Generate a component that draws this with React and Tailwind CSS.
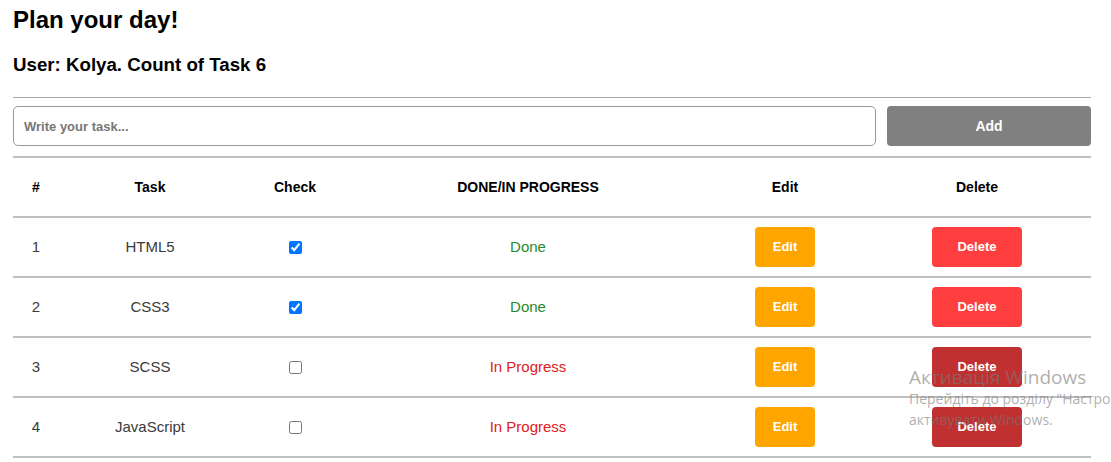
import React from "react";

const tasks = [
  { id: 1, name: "HTML5", done: true },
  { id: 2, name: "CSS3", done: true },
  { id: 3, name: "SCSS", done: false },
  { id: 4, name: "JavaScript", done: false },
];

const cols = "grid grid-cols-[46px_182px_108px_358px_156px_228px] items-center";

export default function App() {
  return (
    <div
      className="relative w-[1111px] h-[462px] overflow-hidden bg-white text-black"
      style={{ fontFamily: '"Liberation Sans", Arial, sans-serif' }}
    >
      <div className="pl-[13px] pr-[20px]">
        <h1 className="mt-[6px] text-[24px] leading-[28px] font-bold">Plan your day!</h1>
        <h2 className="mt-[20px] text-[18.7px] leading-[22px] font-bold">User: Kolya. Count of Task 6</h2>
        <div className="mt-[21px] h-px bg-[#a6a6a6]" />
        <div className="mt-[8px] flex gap-[11px]">
          <input
            className="h-[40px] w-[863px] rounded-[5px] border border-[#9a9a9a] px-[10px] text-[13px] font-bold outline-none placeholder:text-[#777]"
            placeholder="Write your task..."
          />
          <button className="h-[40px] flex-1 rounded-[4px] bg-[#808080] text-[14px] font-bold text-white">
            Add
          </button>
        </div>
        <div className="mt-[10px] border-t-2 border-[#c0c0c0]">
          <div className={`${cols} h-[60px] border-b-2 border-[#c0c0c0] text-center text-[14px] font-bold`}>
            <div>#</div>
            <div>Task</div>
            <div>Check</div>
            <div>DONE/IN PROGRESS</div>
            <div>Edit</div>
            <div>Delete</div>
          </div>
          {tasks.map((t) => (
            <div
              key={t.id}
              className={`${cols} h-[60px] border-b-2 border-[#c0c0c0] text-center text-[15px] text-[#3a3a3a]`}
            >
              <div>{t.id}</div>
              <div>{t.name}</div>
              <div className="flex justify-center">
                <input type="checkbox" defaultChecked={t.done} className="m-0 h-[13px] w-[13px]" />
              </div>
              <div className={t.done ? "text-[#2a8a2a]" : "text-[#e02020]"}>
                {t.done ? "Done" : "In Progress"}
              </div>
              <div className="flex justify-center">
                <button className="h-[40px] w-[60px] rounded-[4px] bg-[#ffa500] text-[13px] font-bold text-white">
                  Edit
                </button>
              </div>
              <div className="flex justify-center">
                <button
                  className={`h-[40px] w-[90px] rounded-[4px] text-[13px] font-bold text-white ${
                    t.done ? "bg-[#ff3f3f]" : "bg-[#c13030]"
                  }`}
                >
                  Delete
                </button>
              </div>
            </div>
          ))}
        </div>
      </div>
      <div
        className="pointer-events-none absolute left-[909px] top-[366px] whitespace-nowrap text-[rgba(120,120,120,0.6)]"
        style={{ fontFamily: '"Open Sans", "Noto Sans", sans-serif' }}
      >
        <div className="text-[19px] leading-[22px]">Активація Windows</div>
        <div className="text-[14px] leading-[21px]">Перейдіть до розділу "Настройки", щоб</div>
        <div className="text-[14px] leading-[21px]">активувати Windows.</div>
      </div>
    </div>
  );
}
